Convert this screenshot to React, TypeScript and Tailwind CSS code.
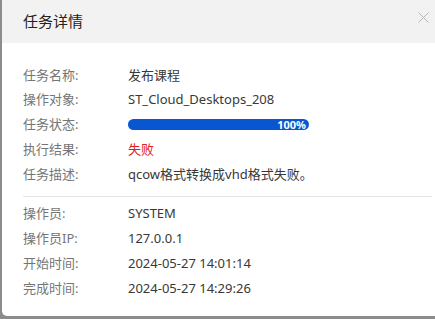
const font = { fontFamily: '"Noto Sans", "Noto Sans CJK SC", sans-serif' };

type Row = { label: string; value: React.ReactNode };

const taskRows: Row[] = [
  { label: '任务名称:', value: '发布课程' },
  { label: '操作对象:', value: 'ST_Cloud_Desktops_208' },
  {
    label: '任务状态:',
    value: (
      <div className="relative flex h-[11px] w-[181px] items-center justify-end rounded-full bg-[#0a55d0] pr-[3px]">
        <span className="text-[11px] leading-none font-bold text-white">100%</span>
      </div>
    ),
  },
  { label: '执行结果:', value: <span className="text-[#e0201e]">失败</span> },
  { label: '任务描述:', value: 'qcow格式转换成vhd格式失败。' },
];

const operatorRows: Row[] = [
  { label: '操作员:', value: 'SYSTEM' },
  { label: '操作员IP:', value: '127.0.0.1' },
  { label: '开始时间:', value: '2024-05-27 14:01:14' },
  { label: '完成时间:', value: '2024-05-27 14:29:26' },
];

function InfoRow({ label, value }: Row) {
  return (
    <div className="flex h-[24.75px] items-center text-[13px]">
      <div className="w-[105px] shrink-0 text-[#757575]">{label}</div>
      <div className="text-[#383838]">{value}</div>
    </div>
  );
}

export default function App() {
  return (
    <div className="h-[319px] w-[435px] overflow-hidden bg-[#8c8c8c]" style={font}>
      <div className="ml-[2px] flex h-[316px] flex-col rounded-bl-[5px] bg-white">
        {/* header */}
        <div className="flex h-[43px] shrink-0 items-center justify-between bg-[#f2f2f2] pr-[6px] pl-[21px]">
          <span className="text-[15px] text-[#222]">任务详情</span>
          <svg width="11" height="11" viewBox="0 0 11 11" className="mb-[8px]">
            <path d="M0.5 0.5 L10.5 10.5 M10.5 0.5 L0.5 10.5" stroke="#b5b5b5" strokeWidth="1" />
          </svg>
        </div>

        <div className="pt-[20px] pr-[3px] pl-[21px]">
          {taskRows.map((r) => (
            <InfoRow key={r.label} {...r} />
          ))}
          <div className="mt-[9px] mb-[5px] h-px bg-[#e4e4e4]" />
          {operatorRows.map((r) => (
            <InfoRow key={r.label} {...r} />
          ))}
        </div>
      </div>
    </div>
  );
}
